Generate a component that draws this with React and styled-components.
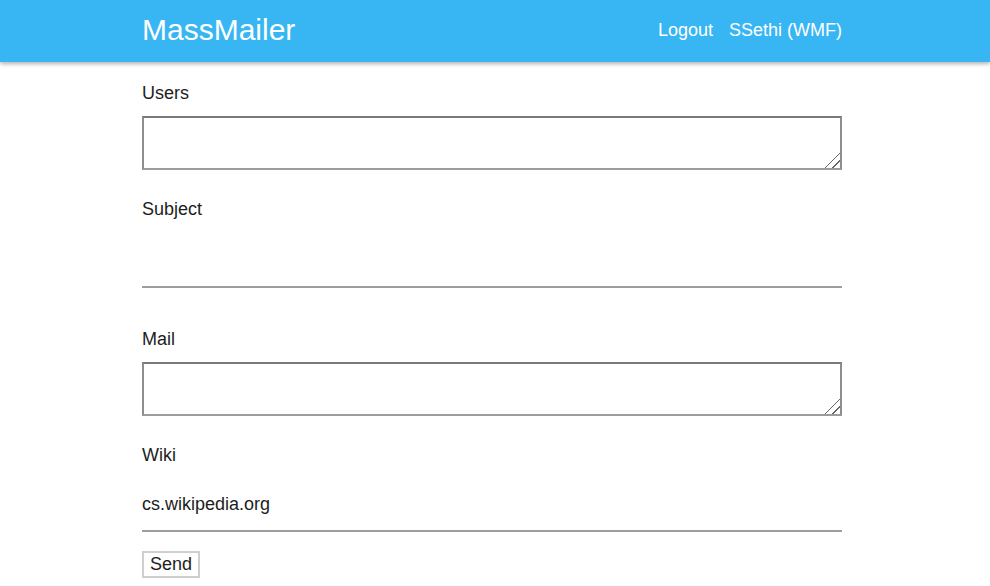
import React from "react";
import styled, { createGlobalStyle } from "styled-components";

const Global = createGlobalStyle`
  html, body { margin: 0; padding: 0; background: #fff; }
  body { font-family: "Liberation Sans", Arial, Helvetica, sans-serif; color: #1d1d1d; }
  * { box-sizing: border-box; }
`;

const Header = styled.header`
  height: 62px;
  background: #37b6f3;
  box-shadow: 0 2px 4px rgba(0, 0, 0, 0.3);
  position: relative;
  z-index: 1;
`;

const Container = styled.div`
  width: 706px;
  padding-right: 6px;
  margin: 0 auto;
`;

const HeaderInner = styled(Container)`
  height: 100%;
  display: flex;
  align-items: center;
  justify-content: space-between;
`;

const Brand = styled.a`
  font-size: 30px;
  color: #fff;
  text-decoration: none;
  line-height: 1;
  margin-top: -2px;
`;

const Nav = styled.nav`
  display: flex;
  gap: 16px;
  margin-top: -2px;
`;

const NavLink = styled.a`
  font-size: 18px;
  color: #fff;
  text-decoration: none;
`;

const Main = styled(Container)`
  padding-top: 21px;
`;

const Form = styled.form`
  display: flex;
  flex-direction: column;
  align-items: flex-start;
`;

const Field = styled.div`
  width: 100%;
  display: flex;
  flex-direction: column;
  margin-bottom: ${(p) => p.$after}px;
`;

const Label = styled.label`
  font-size: 18px;
  line-height: 21px;
  margin-bottom: ${(p) => p.$gap}px;
`;

const TextArea = styled.textarea`
  width: 100%;
  height: 54px;
  border-width: 2px;
  border-style: solid;
  border-color: #7a7a7a #8e8e8e #9c9c9c #8e8e8e;
  font-family: inherit;
  font-size: 18px;
  padding: 2px 4px;
  resize: vertical;
  margin: 0;
  display: block;

  &::-webkit-resizer {
    background: linear-gradient(
      135deg,
      transparent 0 47%,
      #666 47% 53%,
      transparent 53% 71%,
      #666 71% 77%,
      transparent 77%
    );
  }
`;

const LineInput = styled.input`
  width: 100%;
  height: 54px;
  border: none;
  border-bottom: 2px solid #9e9e9e;
  font-family: inherit;
  font-size: 18px;
  color: #1d1d1d;
  padding: 0;
  margin: 0;
  outline: none;
  background: transparent;
`;

const Button = styled.button`
  font-family: inherit;
  font-size: 18px;
  line-height: 21px;
  padding: 1px 6px;
  background: #fff;
  color: #1d1d1d;
  border: 2px solid #cfcfcf;
  border-radius: 0;
  margin: 0;
`;

export default function App() {
  return (
    <>
      <Global />
      <Header>
        <HeaderInner>
          <Brand href="#">MassMailer</Brand>
          <Nav>
            <NavLink href="#">Logout</NavLink>
            <NavLink href="#">SSethi (WMF)</NavLink>
          </Nav>
        </HeaderInner>
      </Header>
      <Main>
        <Form onSubmit={(e) => e.preventDefault()}>
          <Field $after={29}>
            <Label $gap={12}>Users</Label>
            <TextArea />
          </Field>
          <Field $after={41}>
            <Label $gap={14}>Subject</Label>
            <LineInput type="text" />
          </Field>
          <Field $after={29}>
            <Label $gap={12}>Mail</Label>
            <TextArea />
          </Field>
          <Field $after={19}>
            <Label $gap={12}>Wiki</Label>
            <LineInput type="text" defaultValue="cs.wikipedia.org" />
          </Field>
          <Button type="submit">Send</Button>
        </Form>
      </Main>
    </>
  );
}
